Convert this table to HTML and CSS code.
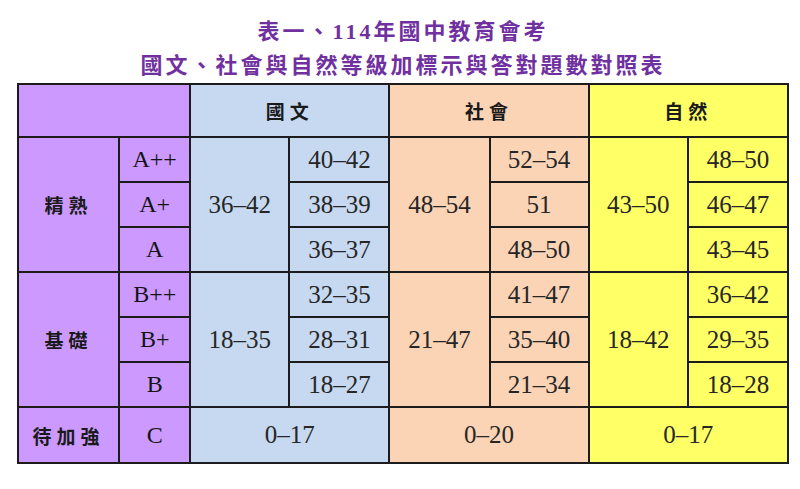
FILE: index.html
```html
<!DOCTYPE html>
<html lang="zh-Hant">
<head>
<meta charset="utf-8">
<title>表一、114年國中教育會考</title>
<link rel="stylesheet" href="styles.css">
</head>
<body>
<div class="wrap">
  <h1 class="title">
    <span class="line">表一、114年國中教育會考</span>
    <span class="line">國文、社會與自然等級加標示與答對題數對照表</span>
  </h1>
  <table class="grid">
    <colgroup>
      <col class="c1"><col class="c2"><col class="c3"><col class="c4"><col class="c5"><col class="c6"><col class="c7"><col class="c8">
    </colgroup>
    <tr class="r-head">
      <th colspan="2" class="p"></th>
      <th colspan="2" class="b lbl">國文</th>
      <th colspan="2" class="o lbl">社會</th>
      <th colspan="2" class="y lbl">自然</th>
    </tr>
    <tr class="r">
      <th rowspan="3" class="p lbl">精熟</th>
      <td class="p g">A++</td>
      <td rowspan="3" class="b n">36–42</td>
      <td class="b n sub">40–42</td>
      <td rowspan="3" class="o n">48–54</td>
      <td class="o n sub">52–54</td>
      <td rowspan="3" class="y n">43–50</td>
      <td class="y n sub">48–50</td>
    </tr>
    <tr class="r">
      <td class="p g">A+</td>
      <td class="b n sub">38–39</td>
      <td class="o n sub">51</td>
      <td class="y n sub">46–47</td>
    </tr>
    <tr class="r">
      <td class="p g">A</td>
      <td class="b n sub">36–37</td>
      <td class="o n sub">48–50</td>
      <td class="y n sub">43–45</td>
    </tr>
    <tr class="r">
      <th rowspan="3" class="p lbl">基礎</th>
      <td class="p g">B++</td>
      <td rowspan="3" class="b n">18–35</td>
      <td class="b n sub">32–35</td>
      <td rowspan="3" class="o n">21–47</td>
      <td class="o n sub">41–47</td>
      <td rowspan="3" class="y n">18–42</td>
      <td class="y n sub">36–42</td>
    </tr>
    <tr class="r">
      <td class="p g">B+</td>
      <td class="b n sub">28–31</td>
      <td class="o n sub">35–40</td>
      <td class="y n sub">29–35</td>
    </tr>
    <tr class="r">
      <td class="p g">B</td>
      <td class="b n sub">18–27</td>
      <td class="o n sub">21–34</td>
      <td class="y n sub">18–28</td>
    </tr>
    <tr class="r-last">
      <th class="p lbl">待加強</th>
      <td class="p g">C</td>
      <td colspan="2" class="b n">0–17</td>
      <td colspan="2" class="o n">0–20</td>
      <td colspan="2" class="y n">0–17</td>
    </tr>
  </table>
</div>
</body>
</html>
```
FILE: styles.css
```css
html, body {
  margin: 0;
  padding: 0;
  background: #ffffff;
}

.wrap {
  width: 772px;
  margin-left: 17px;
}

.title {
  margin: 0;
  padding-top: 15px;
  height: 68px;
  display: flex;
  flex-direction: column;
  align-items: center;
  font-family: "Liberation Serif", "Noto Sans CJK TC", serif;
  font-size: 22px;
  font-weight: bold;
  color: #7030a0;
  letter-spacing: 3px;
}

.title .line {
  line-height: 34px;
  height: 34px;
}

.grid {
  border-collapse: collapse;
  table-layout: fixed;
  width: 772px;
  font-family: "Liberation Serif", "Noto Sans CJK TC", serif;
  color: #222222;
}

.c1 { width: 101px; }
.c2 { width: 71px; }
.c3 { width: 99px; }
.c4 { width: 100px; }
.c5 { width: 100px; }
.c6 { width: 99px; }
.c7 { width: 99px; }
.c8 { width: 100px; }

.grid th,
.grid td {
  border: 2px solid #1c1c1c;
  padding: 0;
  text-align: center;
  vertical-align: middle;
}

.r-head { height: 53px; }
.r { height: 45px; }
.r-last { height: 56px; }

.p { background: #cc99ff; }
.b { background: #c6d9f1; }
.o { background: #fbd3b5; }
.y { background: #ffff66; }

.lbl {
  font-family: "Noto Sans CJK TC", sans-serif;
  font-weight: bold;
  font-size: 19px;
  letter-spacing: 5px;
  padding-left: 5px;
  color: #1a1a1a;
}

.g {
  font-size: 24px;
  font-weight: normal;
  color: #141414;
}

.n {
  font-size: 25px;
  color: #262626;
}

.sub {
  border-left-width: 3px;
}
```
